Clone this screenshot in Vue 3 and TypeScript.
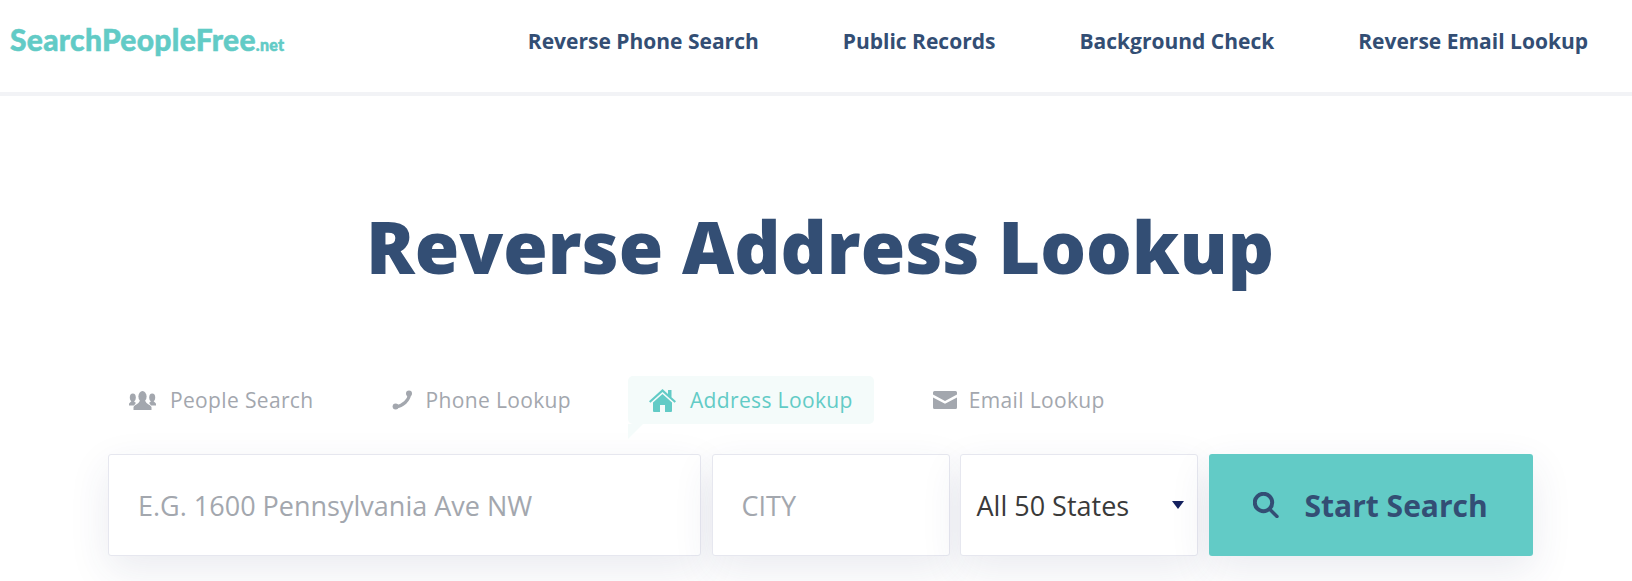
<script setup lang="ts">
const links = ['Reverse Phone Search', 'Public Records', 'Background Check', 'Reverse Email Lookup']
const tabs = [
  { key: 'people', label: 'People Search' },
  { key: 'phone', label: 'Phone Lookup' },
  { key: 'address', label: 'Address Lookup' },
  { key: 'email', label: 'Email Lookup' },
]
</script>

<template>
  <div class="page">
    <header class="topbar">
      <a class="logo">SearchPeopleFree<span>.net</span></a>
      <nav class="links">
        <a v-for="link in links" :key="link">{{ link }}</a>
      </nav>
    </header>

    <main class="hero">
      <h1>Reverse Address Lookup</h1>

      <div class="search">
        <ul class="tabs">
          <li v-for="tab in tabs" :key="tab.key" :class="['tab', tab.key]">
            <svg v-if="tab.key === 'people'" width="27" height="19" viewBox="0 0 27 19">
              <g fill="currentColor">
                <ellipse cx="3.8" cy="6.5" rx="3" ry="3.9" />
                <path d="M0 14.5 V12.8 C0.5 11.6 2 11.2 2.8 9.5 H4.8 C5.2 10.8 6 11.4 7 11.8 L5 14.5 Z" />
                <ellipse cx="23.2" cy="6.5" rx="3" ry="3.9" />
                <path d="M27 14.5 V12.8 C26.5 11.6 25 11.2 24.2 9.5 H22.2 C21.8 10.8 21 11.4 20 11.8 L22 14.5 Z" />
                <ellipse cx="13.5" cy="5.5" rx="4.1" ry="5.4" />
                <path d="M4.5 19 V16.2 C5 13.8 9.5 13.5 11 9.5 H16 C17.5 13.5 22 13.8 22.5 16.2 V19 Z" />
              </g>
            </svg>
            <svg v-else-if="tab.key === 'phone'" width="21" height="20" viewBox="0 0 21 20">
              <circle cx="17" cy="3.4" r="3" fill="currentColor" />
              <circle cx="3.6" cy="16.6" r="3" fill="currentColor" />
              <path d="M17.6 3.6 C17 10.5 11 16 3.6 17" fill="none" stroke="currentColor" stroke-width="3.2" />
            </svg>
            <svg v-else-if="tab.key === 'address'" width="27" height="23" viewBox="0 0 27 23">
              <path fill="currentColor" d="M13.5 0 L19 5 V1 H22.5 V8.2 L27 12.3 L25.6 13.8 L13.5 2.9 L1.4 13.8 L0 12.3 Z M13.5 5 L23 13.5 V22 Q23 23 22 23 H16 V16 H11 V23 H5 Q4 23 4 22 V13.5 Z" />
            </svg>
            <svg v-else-if="tab.key === 'email'" width="24" height="18" viewBox="0 0 24 18">
              <path fill="currentColor" d="M1.5 0 H22.5 Q24 0 24 1.5 V3.6 L12 10 L0 3.6 V1.5 Q0 0 1.5 0 Z M0 6.4 L12 12.8 L24 6.4 V16.5 Q24 18 22.5 18 H1.5 Q0 18 0 16.5 Z" />
            </svg>
            <span>{{ tab.label }}</span>
          </li>
        </ul>

        <form class="fields" @submit.prevent>
          <input class="field street" type="text" placeholder="E.G. 1600 Pennsylvania Ave NW" />
          <input class="field city" type="text" placeholder="CITY" />
          <div class="field state">
            <span>All 50 States</span>
            <i class="caret"></i>
          </div>
          <button class="go" type="submit">
            <svg width="26" height="26" viewBox="0 0 26 26">
              <circle cx="10.5" cy="10.5" r="8.7" fill="none" stroke="currentColor" stroke-width="4" />
              <path d="M17 17.5 L24 24.5" fill="none" stroke="currentColor" stroke-width="3.4" stroke-linecap="round" />
            </svg>
            <span>Start Search</span>
          </button>
        </form>
      </div>
    </main>
  </div>
</template>

<style>
html,
body {
  margin: 0;
  background: #fff;
  overflow: hidden;
}
</style>

<style scoped>
.page {
  height: 581px;
  overflow: hidden;
  font-family: "Open Sans", sans-serif;
  color: #334e74;
}

.topbar {
  display: flex;
  align-items: center;
  justify-content: space-between;
  box-sizing: border-box;
  height: 96px;
  padding: 0 44px 12px 10px;
  border-bottom: 4px solid #f2f3f6;
}

.logo {
  margin-top: -2px;
  font-family: "Lato", sans-serif;
  font-size: 30px;
  font-weight: 900;
  color: #62cbc6;
  letter-spacing: 0.3px;
  -webkit-text-stroke: 0.5px #62cbc6;
}

.logo span {
  font-size: 16px;
}

.links {
  display: flex;
  gap: 84px;
  margin-top: 2px;
}

.links a {
  font-size: 21px;
  font-weight: 700;
}

.hero {
  display: flex;
  flex-direction: column;
  align-items: center;
}

h1 {
  margin: 101px 0 0 8px;
  font-size: 72px;
  line-height: 98px;
  font-weight: 800;
}

.search {
  align-self: flex-start;
  width: 1425px;
  margin: 81px 0 0 108px;
}

.tabs {
  display: flex;
  margin: 0;
  padding: 0;
  list-style: none;
}

.tab {
  display: flex;
  align-items: center;
  gap: 14px;
  height: 48px;
  padding: 0 21px;
  margin-right: 36px;
  font-size: 21px;
  font-weight: 500;
  letter-spacing: 0.35px;
  color: #a3a7ae;
}

.phone {
  gap: 13px;
}

.email {
  gap: 12px;
}

.address {
  position: relative;
  margin-right: 38px;
  background: #f4fbfa;
  color: #62cbc6;
  border-radius: 5px;
}

.address::after {
  content: "";
  position: absolute;
  left: 0;
  top: 100%;
  border-top: 15px solid #f4fbfa;
  border-right: 15px solid transparent;
}

.fields {
  display: flex;
  height: 102px;
  margin-top: 30px;
  gap: 11px;
}

.field {
  box-sizing: border-box;
  height: 100%;
  background: #fff;
  border: 1px solid #e6e7ef;
  border-radius: 3px;
  box-shadow: 0 14px 40px rgba(50, 60, 110, 0.1);
  font-family: inherit;
  font-size: 27px;
  outline: none;
}

.field::placeholder {
  color: #a3a7ae;
  opacity: 1;
}

.street {
  width: 593px;
  padding: 0 29px;
}

.city {
  width: 238px;
  padding: 0 29px;
}

.state {
  display: flex;
  align-items: center;
  justify-content: space-between;
  width: 239px;
  margin-left: -1px;
  padding: 0 13px 0 16px;
  color: #3a3a3a;
}

.caret {
  border-top: 8px solid #14215f;
  border-left: 6px solid transparent;
  border-right: 6px solid transparent;
}

.go {
  display: flex;
  align-items: center;
  justify-content: center;
  gap: 26px;
  width: 324px;
  padding: 0 2px 0 0;
  border: 0;
  border-radius: 3px;
  background: #62cbc6;
  box-shadow: 0 14px 40px rgba(50, 60, 110, 0.1);
  color: #334e74;
  font-family: inherit;
  font-size: 30px;
  font-weight: 700;
}
</style>
